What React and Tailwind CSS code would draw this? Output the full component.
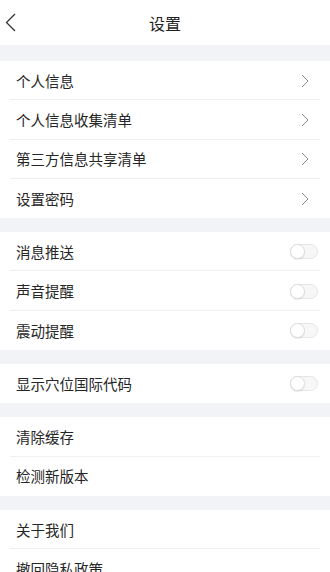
import React from 'react';

const groups = [
  [
    { label: '个人信息', type: 'arrow' },
    { label: '个人信息收集清单', type: 'arrow' },
    { label: '第三方信息共享清单', type: 'arrow' },
    { label: '设置密码', type: 'arrow' },
  ],
  [
    { label: '消息推送', type: 'switch' },
    { label: '声音提醒', type: 'switch' },
    { label: '震动提醒', type: 'switch' },
  ],
  [{ label: '显示穴位国际代码', type: 'switch' }],
  [
    { label: '清除缓存', type: 'none' },
    { label: '检测新版本', type: 'none' },
  ],
  [
    { label: '关于我们', type: 'none' },
    { label: '撤回隐私政策', type: 'none' },
  ],
];

const Arrow = () => (
  <svg width="8" height="14" viewBox="0 0 8 14" fill="none">
    <path d="M1 1l6 6-6 6" stroke="#8a8a8a" strokeWidth="1" />
  </svg>
);

const Switch = () => (
  <div className="w-[28px] h-[15px] rounded-full bg-[#f7f7f7] border border-[#e6e6e6] relative">
    <div className="absolute -left-px -top-px w-[15px] h-[15px] rounded-full bg-white border border-[#dcdcdc] shadow-[0_1px_1px_rgba(0,0,0,0.08)]" />
  </div>
);

const Row = ({ item, last }) => (
  <div className="h-[39.3px] relative flex items-center justify-between pl-4 pr-[21px] bg-white">
    <span className="text-[14.5px] text-[#262626]">{item.label}</span>
    {item.type === 'arrow' && <Arrow />}
    {item.type === 'switch' && <div className="-mr-[9px]"><Switch /></div>}
    {!last && <div className="absolute left-[10px] right-[10px] bottom-0 h-px bg-[#efeff3]" />}
  </div>
);

export default function App() {
  return (
    <div
      className="w-[330px] h-[572px] overflow-hidden bg-[#f2f3f7]"
      style={{ fontFamily: '"Noto Sans CJK SC", "Noto Sans", sans-serif' }}
    >
      {/* Header */}
      <div className="h-[45px] bg-white relative flex items-center justify-center">
        <svg className="absolute left-[5px] top-[13px]" width="11" height="19" viewBox="0 0 11 19" fill="none">
          <path d="M10 1L1.5 9.5 10 18" stroke="#333" strokeWidth="1.3" />
        </svg>
        <span className="text-[16px] text-[#222]">设置</span>
      </div>

      <div className="h-[16px]" />
      {groups.map((g, gi) => (
        <div key={gi} className={gi > 0 ? 'mt-[14px]' : ''}>
          {g.map((item, i) => (
            <Row key={item.label} item={item} last={i === g.length - 1} />
          ))}
        </div>
      ))}
    </div>
  );
}
